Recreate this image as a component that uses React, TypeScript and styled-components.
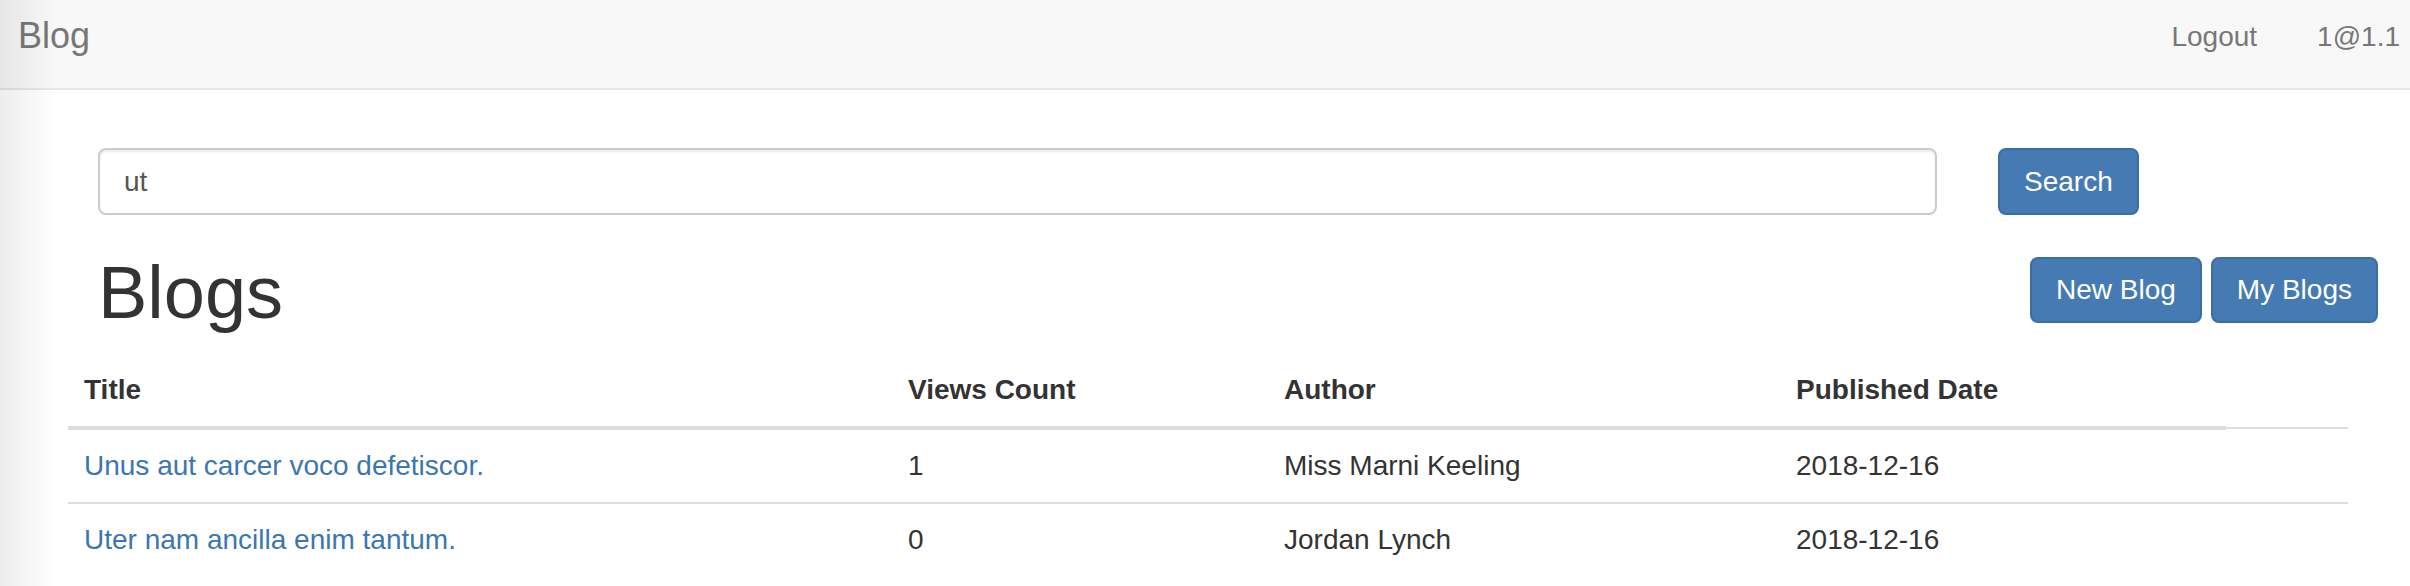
import styled, { createGlobalStyle } from "styled-components";

const GlobalStyle = createGlobalStyle`
    html, body {
        margin: 0;
        padding: 0;
        background: #fff;
    }
    body {
        font-family: "Liberation Sans", Arial, Helvetica, sans-serif;
        font-size: 28px;
        line-height: 40px;
        color: #333;
    }
    * {
        box-sizing: border-box;
    }
`

const Wrapper = styled.div`
    width: 2410px;
    min-height: 586px;
    overflow: hidden;
`

// faint shadow down the left edge of the window
const EdgeShade = styled.div`
    position: fixed;
    top: 0;
    left: 0;
    bottom: 0;
    width: 56px;
    pointer-events: none;
    background: linear-gradient(to right, rgba(0, 0, 0, 0.07), rgba(0, 0, 0, 0));
`

const Navbar = styled.nav`
    display: flex;
    justify-content: space-between;
    align-items: flex-start;
    height: 90px;
    background-color: #f8f8f8;
    border-bottom: 2px solid #e7e7e7;
`
const Brand = styled.a`
    padding: 16px 0 0 18px;
    font-size: 36px;
    line-height: 40px;
    color: #777;
    text-decoration: none;
`
const NavRight = styled.div`
    display: flex;
    padding-right: 10px;
`
const NavLink = styled.a`
    padding: 17px 30px 0;
    font-size: 28px;
    line-height: 40px;
    color: #777;
    text-decoration: none;

    &:last-child {
        padding-right: 0;
    }
`

const Content = styled.div`
    padding: 0 62px 0 68px;
`

const SearchRow = styled.form`
    display: flex;
    align-items: flex-start;
    margin-top: 58px;
    padding-left: 30px;
`
const SearchInput = styled.input`
    width: 1839px;
    height: 67px;
    padding: 12px 24px;
    font-family: inherit;
    font-size: 28px;
    line-height: 40px;
    color: #555;
    background: #fff;
    border: 2px solid #ccc;
    border-radius: 8px;
    box-shadow: inset 0 2px 2px rgba(0, 0, 0, 0.075);
    outline: none;
`

const Button = styled.button<{ $h?: number }>`
    height: ${(p) => p.$h ?? 67}px;
    padding: 0 24px;
    font-family: inherit;
    font-size: 28px;
    line-height: 40px;
    color: #fff;
    background-color: #467ab3;
    border: 2px solid #3c6ea6;
    border-radius: 8px;
    white-space: nowrap;
    cursor: pointer;
`
const SearchButton = styled(Button)`
    margin-left: 61px;
`

const HeadingRow = styled.div`
    display: flex;
    justify-content: space-between;
    align-items: flex-start;
    margin-right: -30px;
    padding-left: 30px;
`
const Title = styled.h1`
    margin: 37px 0 0;
    font-size: 74px;
    line-height: 81px;
    font-weight: 500;
    color: #333;
`
const ButtonGroup = styled.div`
    display: flex;
    gap: 9px;
    margin-top: 42px;
`

const Table = styled.table`
    width: 2280px;
    margin-top: 21px;
    table-layout: fixed;
    border-collapse: collapse;
    border-spacing: 0;
`
const Col = styled.col<{ $w: number }>`
    width: ${(p) => p.$w}px;
`
const Th = styled.th`
    padding: 16px;
    text-align: left;
    font-weight: bold;
    line-height: 40px;
    vertical-align: bottom;
    border-bottom: 4px solid #ddd;
`
const Td = styled.td`
    padding: 16px;
    line-height: 40px;
    vertical-align: top;
    border-top: 2px solid #ddd;
`
const TitleLink = styled.a`
    color: #3b76b2;
    text-decoration: none;
`

const blogs = [
    { title: "Unus aut carcer voco defetiscor.", views: 1, author: "Miss Marni Keeling", date: "2018-12-16" },
    { title: "Uter nam ancilla enim tantum.", views: 0, author: "Jordan Lynch", date: "2018-12-16" },
];

export default function App() {
    return (
        <Wrapper>
            <GlobalStyle />
            <Navbar>
                <Brand href="#">Blog</Brand>
                <NavRight>
                    <NavLink href="#">Logout</NavLink>
                    <NavLink href="#">1@1.1</NavLink>
                </NavRight>
            </Navbar>
            <Content>
                <SearchRow onSubmit={(e) => e.preventDefault()}>
                    <SearchInput type="text" defaultValue="ut" />
                    <SearchButton type="submit">Search</SearchButton>
                </SearchRow>
                <HeadingRow>
                    <Title>Blogs</Title>
                    <ButtonGroup>
                        <Button $h={66}>New Blog</Button>
                        <Button $h={66}>My Blogs</Button>
                    </ButtonGroup>
                </HeadingRow>
                <Table>
                    <colgroup>
                        <Col $w={824} />
                        <Col $w={376} />
                        <Col $w={512} />
                        <Col $w={446} />
                        <Col $w={122} />
                    </colgroup>
                    <thead>
                        <tr>
                            <Th>Title</Th>
                            <Th>Views Count</Th>
                            <Th>Author</Th>
                            <Th>Published Date</Th>
                        </tr>
                    </thead>
                    <tbody>
                        {blogs.map((b) => (
                            <tr key={b.title}>
                                <Td><TitleLink href="#">{b.title}</TitleLink></Td>
                                <Td>{b.views}</Td>
                                <Td>{b.author}</Td>
                                <Td>{b.date}</Td>
                                <Td></Td>
                            </tr>
                        ))}
                    </tbody>
                </Table>
            </Content>
            <EdgeShade />
        </Wrapper>
    );
}
